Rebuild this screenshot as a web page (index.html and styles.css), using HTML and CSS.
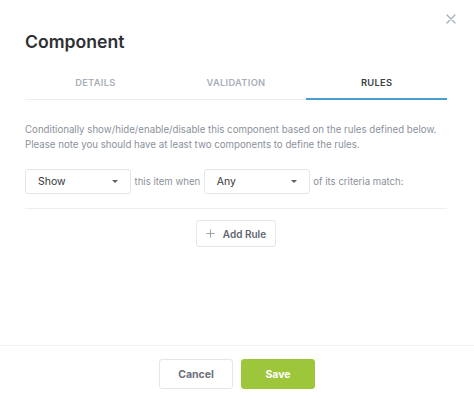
FILE: index.html
```html
<!DOCTYPE html>
<html>
<head>
<meta charset="utf-8">
<link rel="stylesheet" href="styles.css">
</head>
<body>
<div class="modal">
  <button class="close" aria-label="Close">
    <svg width="10" height="10" viewBox="0 0 10 10"><path d="M1 1L9 9M9 1L1 9" stroke="#a3abb8" stroke-width="1.2" fill="none" stroke-linecap="round"/></svg>
  </button>
  <div class="body">
    <h1 class="title">Component</h1>
    <div class="tabs">
      <div class="tab">DETAILS</div>
      <div class="tab">VALIDATION</div>
      <div class="tab active">RULES</div>
    </div>
    <p class="desc">Conditionally show/hide/enable/disable this component based on the rules defined below.<br>Please note you should have at least two components to define the rules.</p>
    <div class="rule-row">
      <div class="select"><span>Show</span><span class="caret"></span></div>
      <span class="label">this item when</span>
      <div class="select"><span>Any</span><span class="caret"></span></div>
      <span class="label">of its criteria match:</span>
    </div>
    <div class="add-wrap">
      <button class="add-btn"><svg width="9" height="9" viewBox="0 0 9 9"><path d="M4.5 0.5V8.5M0.5 4.5H8.5" stroke="#9aa1ad" stroke-width="1" fill="none"/></svg><span>Add Rule</span></button>
    </div>
  </div>
  <div class="footer">
    <button class="btn cancel">Cancel</button>
    <button class="btn save">Save</button>
  </div>
</div>
</body>
</html>
```
FILE: styles.css
```css
* { box-sizing: border-box; }
html, body { margin: 0; padding: 0; background: #fff; }
body { font-family: Inter, "Noto Sans", "Liberation Sans", sans-serif; }
.modal {
  position: relative;
  width: 474px;
  height: 402px;
  display: flex;
  flex-direction: column;
  background: #fff;
}
.close {
  position: absolute;
  top: 14px;
  left: 446px;
  width: 10px;
  height: 10px;
  padding: 0;
  border: 0;
  background: none;
  display: flex;
}
.body {
  flex: 1;
  padding: 30px 27px 0 25px;
}
.title {
  margin: 0;
  font-size: 17.6px;
  line-height: 24px;
  font-weight: 600;
  color: #2e3034;
}
.tabs {
  margin-top: 12px;
  display: flex;
  border-bottom: 1px solid #eceef1;
}
.tab {
  flex: 1;
  text-align: center;
  font-size: 9.3px;
  line-height: 14px;
  font-weight: 600;
  letter-spacing: 0.3px;
  color: #a9afb9;
  padding: 10px 0 8px;
  border-bottom: 2px solid transparent;
  margin-bottom: -1px;
}
.tab.active {
  color: #3b3e44;
  border-bottom-color: #4a9ecf;
}
.desc {
  margin: 22px 0 0;
  font-size: 9.7px;
  line-height: 15px;
  color: #8c919b;
  white-space: nowrap;
}
.rule-row {
  margin-top: 17px;
  display: flex;
  align-items: center;
  gap: 3.5px;
  padding-bottom: 14px;
  border-bottom: 1px solid #eceef1;
}
.select {
  width: 106px;
  height: 25px;
  border: 1px solid #e3e6ea;
  border-radius: 3px;
  display: flex;
  align-items: center;
  justify-content: space-between;
  padding: 0 12px 0 12px;
  font-size: 10.5px;
  color: #34373c;
}
.caret {
  width: 0;
  height: 0;
  border-left: 3.5px solid transparent;
  border-right: 3.5px solid transparent;
  border-top: 3.5px solid #5a5e66;
}
.label {
  font-size: 9.6px;
  color: #8c919b;
}
.add-wrap {
  display: flex;
  justify-content: center;
  margin-top: 11px;
}
.add-btn {
  width: 80px;
  height: 27px;
  border: 1px solid #e3e6ea;
  border-radius: 3px;
  background: #fff;
  display: flex;
  align-items: center;
  justify-content: center;
  gap: 8px;
  font-family: inherit;
  font-size: 10px;
  font-weight: 600;
  color: #5f6570;
  padding: 0;
}
.footer {
  height: 57px;
  border-top: 1px solid #f1f2f4;
  display: flex;
  justify-content: center;
  gap: 8px;
  padding-top: 13px;
}
.btn {
  width: 74px;
  height: 30px;
  border-radius: 3px;
  font-family: inherit;
  font-size: 10.5px;
  font-weight: 700;
  padding: 0;
}
.cancel {
  background: #fff;
  border: 1px solid #e3e6ea;
  color: #6b717c;
}
.save {
  background: #9ec63b;
  border: 1px solid #9ec63b;
  color: #fff;
}
```
